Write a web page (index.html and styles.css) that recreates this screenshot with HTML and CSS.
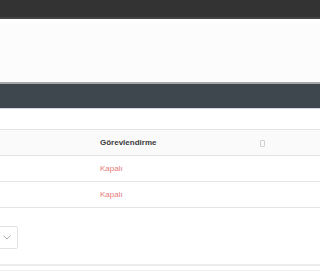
FILE: index.html
```html
<!DOCTYPE html>
<html lang="tr">
<head>
    <meta charset="UTF-8">
    <meta name="viewport" content="width=device-width, initial-scale=1.0">
    <title>Görevlendirme</title>
    <link rel="stylesheet" href="styles.css">
</head>
<body>
    <div class="topbar"></div>
    <div class="banner"></div>
    <div class="navbar"></div>

    <div class="content">
        <table class="grid">
            <thead>
                <tr>
                    <th class="first"></th>
                    <th class="sortable">Görevlendirme <span class="sort-icon"></span></th>
                    <th class="last"></th>
                </tr>
            </thead>
            <tbody>
                <tr>
                    <td class="first"></td>
                    <td class="status">Kapalı</td>
                    <td class="last"></td>
                </tr>
                <tr>
                    <td class="first"></td>
                    <td class="status">Kapalı</td>
                    <td class="last"></td>
                </tr>
            </tbody>
        </table>

        <div class="pager">
            <div class="page-size">
                <svg width="8" height="5" viewBox="0 0 8 5">
                    <path d="M0.5 0.5 L4 4 L7.5 0.5" fill="none" stroke="#999" stroke-width="0.8"/>
                </svg>
            </div>
        </div>
    </div>

    <div class="footer"></div>
</body>
</html>
```

FILE: styles.css
```css
body {
    margin: 0;
    font-family: "Liberation Sans", Arial, sans-serif;
    background: #fff;
    overflow: hidden;
}

.topbar {
    height: 17px;
    background: #333333;
    border-bottom: 2px solid #444;
}

.banner {
    height: 59px;
    background: #fcfcfc;
    border-top: 4px solid #fff;
    border-bottom: 2px solid #a5a8ab;
}

.navbar {
    height: 24px;
    background: #3f474e;
    border-bottom: 1px solid #d6d7e3;
}

.content {
    padding-top: 20px;
}

.grid {
    width: calc(100% + 20px);
    margin-left: -20px;
    border-collapse: collapse;
    font-size: 8px;
}

.grid th,
.grid td {
    height: 25px;
    padding: 0 8px;
    text-align: left;
    border-top: 1px solid #e4e4e4;
    border-bottom: 1px solid #e4e4e4;
}

.grid th {
    background: #fafafa;
    color: #3a3a3a;
    font-weight: 600;
}

.grid .first {
    width: 96px;
}

.grid .sortable {
    width: 160px;
    position: relative;
}

.sort-icon {
    position: absolute;
    right: 3px;
    top: 10px;
    width: 3px;
    height: 5px;
    border: 1px solid #d0d0d0;
    border-radius: 1px;
}

.grid .status {
    color: #e57b78;
}

.pager {
    padding: 18px 0 15px;
    border-bottom: 2px solid #ececec;
}

.page-size {
    width: 40px;
    height: 23px;
    margin-left: -22px;
    border: 1px solid #e2e2e2;
    border-radius: 2px;
    display: flex;
    align-items: center;
    justify-content: flex-end;
    padding-right: 6px;
    box-sizing: border-box;
}

.footer {
    margin-top: 4px;
    border-top: 1px solid #f0f0f0;
    height: 10px;
}
```
